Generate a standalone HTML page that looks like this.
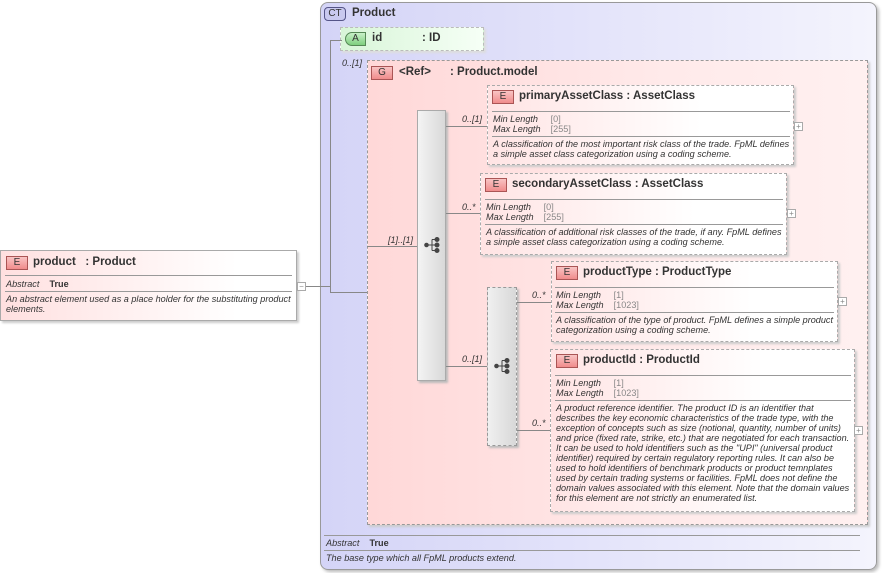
<!DOCTYPE html>
<html><head><meta charset="utf-8"><style>
*{margin:0;padding:0;box-sizing:border-box}
body{width:882px;height:573px;background:#fff;position:relative;overflow:hidden;font-family:"Liberation Sans",sans-serif;color:#333}
.a{position:absolute}
.box{position:absolute;border:1px dashed #aaa;background:linear-gradient(90deg,#ffe4e4,#fff 70%);box-shadow:2px 2px 2px #ccc}
.badge{position:absolute;width:22px;height:14px;border:1px solid #a55;background:linear-gradient(#f9c4c4,#f08c8c);font-size:10px;text-align:center;line-height:12px;color:#333}
.t{position:absolute;font-weight:bold;font-size:11.5px;white-space:nowrap}
.s{position:absolute;font-size:9.1px;font-style:italic;white-space:nowrap;line-height:10px}
.g{color:#888;font-style:normal}
.hl{position:absolute;height:1px;background:#888}
.vl{position:absolute;width:1px;background:#888}
.pl{position:absolute;width:9px;height:9px;border:1px solid #aaa;background:#fff;font-size:8px;line-height:7px;text-align:center;color:#888}
.c{position:absolute;font-size:9px;font-style:italic}
</style></head><body>
<div class="a" style="left:320px;top:2px;width:557px;height:568px;border:1px solid #999;border-radius:8px;background:linear-gradient(90deg,#d4d4f7,#f4f4fd);box-shadow:2px 2px 3px #bbb"></div>
<div class="a" style="left:324px;top:7px;width:22px;height:14px;border:1px solid #558;border-radius:4px;background:#c9c9ef;font-size:10px;text-align:center;line-height:12px">CT</div>
<div class="t" style="left:352px;top:7px">Product</div>
<div class="a" style="left:340px;top:27px;width:144px;height:24px;border:1px dashed #bbb;background:linear-gradient(90deg,#d8f5d8,#f6fff6);box-shadow:2px 2px 2px #ddd"></div>
<div class="a" style="left:345px;top:32px;width:21px;height:14px;border:1px solid #585;border-radius:7px 0 0 7px;background:linear-gradient(#c8f0c8,#7fcf7f);font-size:10px;text-align:center;line-height:12px">A</div>
<div class="t" style="left:372px;top:32px">id</div><div class="t" style="left:422px;top:32px">: ID</div>
<div class="vl" style="left:330px;top:40px;height:252px"></div>
<div class="hl" style="left:330px;top:40px;width:12px"></div>
<div class="hl" style="left:305px;top:286px;width:25px"></div>
<div class="hl" style="left:330px;top:292px;width:37px"></div>
<div class="c" style="left:342px;top:58px">0..[1]</div>
<div class="a" style="left:0;top:250px;width:297px;height:71px;border:1px solid #aaa;background:linear-gradient(90deg,#ffe0e0,#fff 80%);box-shadow:2px 2px 2px #ccc"></div>
<div class="badge" style="left:6px;top:256px">E</div>
<div class="t" style="left:33px;top:256px">product&nbsp;&nbsp; : Product</div>
<div class="hl" style="left:5px;top:275px;width:287px;background:#999"></div>
<div class="s" style="left:6px;top:279px">Abstract&nbsp;&nbsp;&nbsp; <b style="font-style:normal">True</b></div>
<div class="hl" style="left:5px;top:291px;width:287px;background:#999"></div>
<div class="s" style="left:6px;top:294px">An abstract element used as a place holder for the substituting product<br>elements.</div>
<div class="pl" style="left:297px;top:282px">−</div>
<div class="a" style="left:367px;top:60px;width:501px;height:465px;border:1px dashed #999;background:linear-gradient(90deg,#ffd8d8,#ffeaea 60%,#fff0f0);box-shadow:2px 2px 2px #ccc"></div>
<div class="badge" style="left:371px;top:66px">G</div>
<div class="t" style="left:399px;top:66px">&lt;Ref&gt;</div><div class="t" style="left:450px;top:66px">: Product.model</div>
<div class="c" style="left:388px;top:235px">[1]..[1]</div>
<div class="hl" style="left:367px;top:246px;width:50px"></div>
<div class="a" style="left:417px;top:110px;width:29px;height:271px;border:1px solid #aaa;background:linear-gradient(90deg,#f4f4f4,#d8d8d8);box-shadow:2px 2px 2px #bbb"></div>
<svg class="a" style="left:424px;top:237px" width="18" height="16" viewBox="0 0 18 16"><g fill="#444" stroke="#444"><circle cx="2.5" cy="8" r="1.8"/><circle cx="13" cy="2.5" r="2"/><circle cx="13" cy="8" r="2"/><circle cx="13" cy="13.5" r="2"/><path d="M2.5 8H8M8 2.5V13.5M8 2.5H13M8 8H13M8 13.5H13" fill="none"/></g></svg>
<div class="hl" style="left:446px;top:126px;width:41px"></div><div class="c" style="left:462px;top:114px">0..[1]</div>
<div class="hl" style="left:446px;top:213px;width:34px"></div><div class="c" style="left:462px;top:202px">0..*</div>
<div class="hl" style="left:446px;top:366px;width:41px"></div><div class="c" style="left:462px;top:354px">0..[1]</div>
<div class="box" style="left:487px;top:85px;width:307px;height:80px"></div>
<div class="badge" style="left:492px;top:90px">E</div>
<div class="t" style="left:519px;top:90px">primaryAssetClass&nbsp;: AssetClass</div>
<div class="hl" style="left:492px;top:111px;width:298px;background:#999"></div>
<div class="s" style="left:493px;top:114px">Min Length&nbsp;&nbsp;&nbsp;&nbsp; <span class="g">[0]</span><br>Max Length&nbsp;&nbsp;&nbsp; <span class="g">[255]</span></div>
<div class="hl" style="left:492px;top:136px;width:298px;background:#999"></div>
<div class="s" style="left:493px;top:139px">A classification of the most important risk class of the trade. FpML defines<br>a simple asset class categorization using a coding scheme.</div>
<div class="pl" style="left:794px;top:122px">+</div>
<div class="box" style="left:480px;top:173px;width:307px;height:82px"></div>
<div class="badge" style="left:485px;top:178px">E</div>
<div class="t" style="left:512px;top:178px">secondaryAssetClass&nbsp;: AssetClass</div>
<div class="hl" style="left:485px;top:199px;width:298px;background:#999"></div>
<div class="s" style="left:486px;top:202px">Min Length&nbsp;&nbsp;&nbsp;&nbsp; <span class="g">[0]</span><br>Max Length&nbsp;&nbsp;&nbsp; <span class="g">[255]</span></div>
<div class="hl" style="left:485px;top:224px;width:298px;background:#999"></div>
<div class="s" style="left:486px;top:227px">A classification of additional risk classes of the trade, if any. FpML defines<br>a simple asset class categorization using a coding scheme.</div>
<div class="pl" style="left:787px;top:209px">+</div>
<div class="a" style="left:487px;top:287px;width:30px;height:159px;border:1px dashed #999;background:linear-gradient(90deg,#f0f0f0,#d8d8d8);box-shadow:2px 2px 2px #bbb"></div>
<svg class="a" style="left:494px;top:358px" width="18" height="16" viewBox="0 0 18 16"><g fill="#444" stroke="#444"><circle cx="2.5" cy="8" r="1.8"/><circle cx="13" cy="2.5" r="2"/><circle cx="13" cy="8" r="2"/><circle cx="13" cy="13.5" r="2"/><path d="M2.5 8H8M8 2.5V13.5M8 2.5H13M8 8H13M8 13.5H13" fill="none"/></g></svg>
<div class="hl" style="left:517px;top:302px;width:34px"></div><div class="c" style="left:532px;top:290px">0..*</div>
<div class="hl" style="left:517px;top:430px;width:33px"></div><div class="c" style="left:532px;top:418px">0..*</div>
<div class="box" style="left:551px;top:261px;width:287px;height:81px"></div>
<div class="badge" style="left:556px;top:266px">E</div>
<div class="t" style="left:583px;top:266px">productType&nbsp;: ProductType</div>
<div class="hl" style="left:555px;top:287px;width:279px;background:#999"></div>
<div class="s" style="left:556px;top:290px">Min Length&nbsp;&nbsp;&nbsp;&nbsp; <span class="g">[1]</span><br>Max Length&nbsp;&nbsp;&nbsp; <span class="g">[1023]</span></div>
<div class="hl" style="left:555px;top:312px;width:279px;background:#999"></div>
<div class="s" style="left:556px;top:315px">A classification of the type of product. FpML defines a simple product<br>categorization using a coding scheme.</div>
<div class="pl" style="left:838px;top:297px">+</div>
<div class="box" style="left:550px;top:349px;width:305px;height:163px"></div>
<div class="badge" style="left:556px;top:354px">E</div>
<div class="t" style="left:583px;top:354px">productId&nbsp;: ProductId</div>
<div class="hl" style="left:555px;top:375px;width:296px;background:#999"></div>
<div class="s" style="left:556px;top:378px">Min Length&nbsp;&nbsp;&nbsp;&nbsp; <span class="g">[1]</span><br>Max Length&nbsp;&nbsp;&nbsp; <span class="g">[1023]</span></div>
<div class="hl" style="left:555px;top:400px;width:296px;background:#999"></div>
<div class="s" style="left:556px;top:403px">A product reference identifier. The product ID is an identifier that<br>describes the key economic characteristics of the trade type, with the<br>exception of concepts such as size (notional, quantity, number of units)<br>and price (fixed rate, strike, etc.) that are negotiated for each transaction.<br>It can be used to hold identifiers such as the "UPI" (universal product<br>identifier) required by certain regulatory reporting rules. It can also be<br>used to hold identifiers of benchmark products or product temnplates<br>used by certain trading systems or facilities. FpML does not define the<br>domain values associated with this element. Note that the domain values<br>for this element are not strictly an enumerated list.</div>
<div class="pl" style="left:854px;top:426px">+</div>
<div class="hl" style="left:324px;top:535px;width:536px;background:#999"></div>
<div class="s" style="left:326px;top:538px">Abstract&nbsp;&nbsp;&nbsp; <b style="font-style:normal">True</b></div>
<div class="hl" style="left:324px;top:550px;width:536px;background:#999"></div>
<div class="s" style="left:326px;top:553px">The base type which all FpML products extend.</div>
</body></html>
